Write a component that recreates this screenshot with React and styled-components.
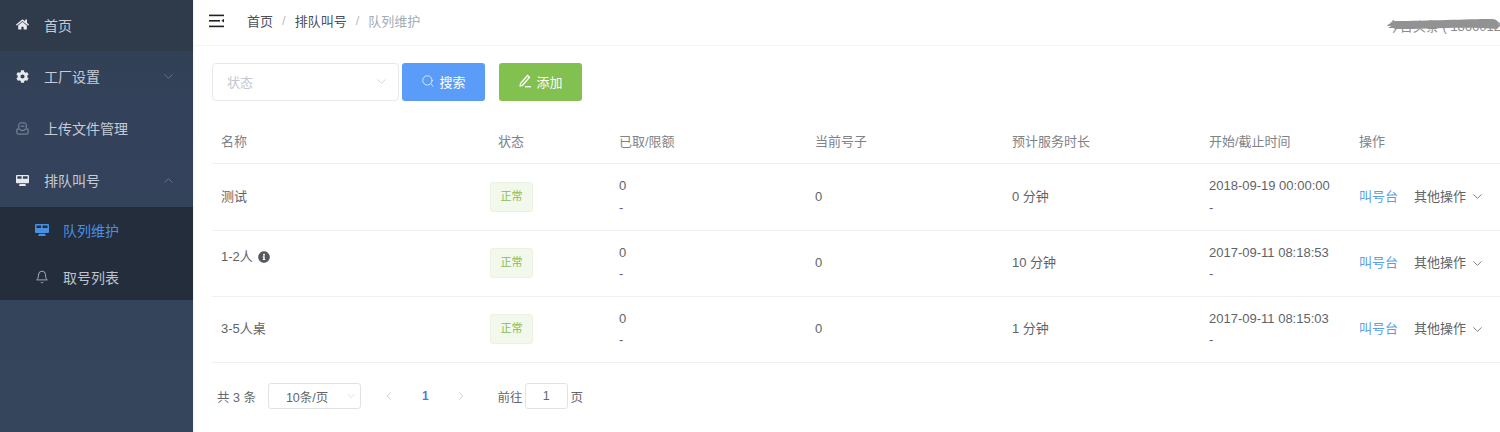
import React from "react";
import styled, { createGlobalStyle } from "styled-components";
import { FaHome, FaCog, FaInfoCircle } from "react-icons/fa";
import { LuChevronDown, LuChevronUp, LuChevronLeft, LuChevronRight, LuBell, LuSearch } from "react-icons/lu";

const font = `"Liberation Sans", "Noto Sans CJK SC", sans-serif`;

const GlobalStyle = createGlobalStyle`
  html, body {
    margin: 0;
    padding: 0;
    height: 432px;
    overflow: hidden;
    background: #fff;
    font-family: ${font};
  }
`;

const Page = styled.div`
  display: flex;
  width: 1500px;
  height: 432px;
  overflow: hidden;
`;

// SIDEBAR
const Sidebar = styled.aside`
  width: 193px;
  flex-shrink: 0;
  background: linear-gradient(180deg, #323e50 0px, #33425a 100px, #35455c 432px);
  display: flex;
  flex-direction: column;
`;

const MenuItem = styled.div`
  height: ${(p) => (p.$short ? 51 : 52)}px;
  box-sizing: border-box;
  padding-bottom: 2px;
  display: flex;
  align-items: center;
  padding-left: 16px;
  font-size: 14px;
  color: #c5ccd6;
  background: ${(p) => (p.$dark ? "#2f3a4a" : "transparent")};
  svg.lead {
    width: 13px;
    height: 13px;
    margin-right: 15px;
    color: ${(p) => p.$iconColor || "#e6e9ee"};
  }
`;

const MenuArrow = styled.span`
  margin-left: auto;
  margin-right: 17px;
  display: flex;
  color: #76839a;
  svg {
    width: 15px;
    height: 15px;
    stroke-width: 1.2;
  }
`;

const SubMenu = styled.div`
  background: #232d3b;
  height: 93px;
  display: flex;
  flex-direction: column;
`;

const SubItem = styled.div`
  height: 46.5px;
  display: flex;
  align-items: center;
  padding-left: 35px;
  font-size: 14px;
  color: ${(p) => (p.$active ? "#4a90e2" : "#bcc4cf")};
  svg {
    width: 14px;
    height: 14px;
    margin-right: 14px;
    stroke-width: 1.4;
  }
`;

// MAIN
const Main = styled.main`
  flex: 1;
  min-width: 0;
  display: flex;
  flex-direction: column;
  box-shadow: inset 1px 0 0 #eef5fb;
`;

const Header = styled.header`
  height: 46px;
  flex-shrink: 0;
  box-sizing: border-box;
  border-bottom: 1px solid #f3f4f5;
  display: flex;
  align-items: center;
  padding-left: 16px;
  padding-bottom: 4px;
  position: relative;
`;

const Crumb = styled.span`
  font-size: 13px;
  color: ${(p) => (p.$last ? "#a3abb5" : "#4a4f57")};
`;

const CrumbSep = styled.span`
  font-size: 13px;
  color: #b8bcc2;
  margin: 0 9px;
`;

const Crumbs = styled.div`
  display: flex;
  align-items: center;
  margin-left: 22px;
`;

const User = styled.div`
  position: absolute;
  right: -1px;
  top: 18px;
  font-size: 13px;
  line-height: 18px;
  color: #8a8a8a;
  white-space: nowrap;
`;

const Smear = styled.svg`
  position: absolute;
  right: 0;
  top: 16px;
  width: 113px;
  height: 18px;
`;

const Toolbar = styled.div`
  display: flex;
  align-items: center;
  padding: 17px 0 0 19px;
`;

const SelectBox = styled.div`
  width: 187px;
  height: 38px;
  box-sizing: border-box;
  border: 1px solid #e6e8eb;
  border-radius: 4px;
  display: flex;
  align-items: center;
  padding: 0 9px 2px 14px;
  font-size: 13px;
  color: #c3c8cf;
  svg {
    margin-left: auto;
    width: 15px;
    height: 15px;
    color: #c0c4cc;
    stroke-width: 1.2;
  }
`;

const Button = styled.div`
  height: 38px;
  box-sizing: border-box;
  padding-bottom: 2px;
  width: ${(p) => p.$width}px;
  margin-left: ${(p) => p.$gap}px;
  border-radius: 3px;
  background: ${(p) => p.$bg};
  color: #fff;
  font-size: 13px;
  display: flex;
  align-items: center;
  justify-content: center;
  gap: 4px;
  svg {
    width: 14px;
    height: 14px;
    stroke-width: 1.3;
  }
`;

// TABLE
const Table = styled.div`
  margin: 19px 0 0 19px;
`;

const Row = styled.div`
  display: grid;
  grid-template-columns: 277px 121px 196px 197px 197px 150px 1fr;
  height: ${(p) => p.$height}px;
  box-sizing: border-box;
  border-bottom: 1px solid #eef0f2;
  align-items: center;
  font-size: 13px;
  color: #5f6368;
`;

const HeadCell = styled.div`
  padding-left: 9px;
  font-size: 13px;
  color: #7e8389;
  padding-bottom: 2px;
`;

const Cell = styled.div`
  padding-left: 9px;
  padding-bottom: 1px;
  line-height: 21.5px;
  white-space: nowrap;
  font-size: 13px;
`;

const NameWithInfo = styled(Cell)`
  display: flex;
  align-items: center;
  gap: 5px;
  align-self: start;
  padding-top: 15px;
  svg {
    width: 12px;
    height: 12px;
    color: #55585d;
  }
`;

const Tag = styled.span`
  display: inline-flex;
  align-items: center;
  justify-content: center;
  width: 43px;
  height: 30px;
  box-sizing: border-box;
  background: #f2f9ec;
  border: 1px solid #e9f3df;
  border-radius: 3px;
  color: #85bd55;
  font-size: 11px;
  margin-left: -8px;
`;

const LinkText = styled.span`
  color: #5a9fe6;
  margin-right: 16px;
`;

const MoreText = styled.span`
  display: inline-flex;
  align-items: center;
  color: #5f6368;
  svg {
    width: 15px;
    height: 15px;
    margin-left: 4px;
    stroke-width: 1.3;
  }
`;

// PAGER
const Pager = styled.div`
  display: flex;
  align-items: center;
  margin: 20px 0 0 24px;
  font-size: 12.5px;
  color: #63676d;
`;

const PageSize = styled.div`
  width: 93px;
  height: 26px;
  margin-left: 12px;
  box-sizing: border-box;
  border: 1px solid #dfe2e6;
  border-radius: 3px;
  display: flex;
  align-items: center;
  padding-left: 17px;
  svg {
    margin-left: auto;
    margin-right: 3px;
    width: 12px;
    height: 12px;
    color: #c5c9cf;
    stroke-width: 1.2;
  }
`;

const PageArrow = styled.span`
  display: flex;
  color: #b4b9bf;
  margin-left: ${(p) => p.$gap}px;
  svg {
    width: 14px;
    height: 14px;
    stroke-width: 1.2;
  }
`;

const PageNumber = styled.span`
  color: #4a7fd0;
  font-weight: 700;
  font-size: 12px;
  margin-left: 26px;
`;

const JumpLabel = styled.span`
  margin-left: 30px;
`;

const JumpInput = styled.div`
  width: 43px;
  height: 26px;
  box-sizing: border-box;
  margin: 0 3px 0 2px;
  border: 1px solid #dfe2e6;
  border-radius: 3px;
  display: flex;
  align-items: center;
  justify-content: center;
`;

const ToggleIcon = () => (
  <svg width="16" height="14" viewBox="0 0 16 14" fill="#222">
    <rect x="0" y="0.6" width="15" height="1.6" />
    <rect x="0" y="6" width="11" height="1.6" />
    <rect x="0" y="11.6" width="15" height="1.6" />
    <path d="M15 4.8v3.8l-2.6-1.9z" />
  </svg>
);

const UploadIcon = () => (
  <svg className="lead" viewBox="0 0 14 14" fill="none" stroke="currentColor" strokeWidth="0.9">
    <path d="M3 6.5V3a2 2 0 0 1 2-2h4a2 2 0 0 1 2 2v3.5" />
    <path d="M1 7.5h3.2l.8 1.5h4l.8-1.5H13v4.5a1 1 0 0 1-1 1H2a1 1 0 0 1-1-1z" />
    <path d="M5 4.5h4" />
  </svg>
);

const ScreenIcon = ({ className }) => (
  <svg className={className} viewBox="0 0 14 14" fill="currentColor">
    <path fillRule="evenodd" d="M1 1h12a1 1 0 0 1 1 1v7a1 1 0 0 1-1 1H1a1 1 0 0 1-1-1V2a1 1 0 0 1 1-1zm.5 1.5v2.6h4.5V2.5zm6 0v2.6h5V2.5z" />
    <path d="M4 10.8h6l.8 2.2H3.2z" />
  </svg>
);

const EditIcon = () => (
  <svg viewBox="0 0 14 14" fill="none" stroke="currentColor" strokeWidth="1">
    <path d="M2.5 9.5 9.5 1.5l2 1.8-7 8-2.3.6z" />
    <path d="M7 12.7h6" />
  </svg>
);

const rows = [
  { name: "测试", height: 67, wait: "0 分钟", time: "2018-09-19 00:00:00" },
  { name: "1-2人", info: true, height: 66, wait: "10 分钟", time: "2017-09-11 08:18:53" },
  { name: "3-5人桌", height: 66, wait: "1 分钟", time: "2017-09-11 08:15:03" },
];

const columns = ["名称", "状态", "已取/限额", "当前号子", "预计服务时长", "开始/截止时间", "操作"];

const App = () => (
  <Page>
    <GlobalStyle />
    <Sidebar>
      <MenuItem $dark $short>
        <FaHome className="lead" />
        首页
      </MenuItem>
      <MenuItem>
        <FaCog className="lead" />
        工厂设置
        <MenuArrow>
          <LuChevronDown />
        </MenuArrow>
      </MenuItem>
      <MenuItem $iconColor="#93a0b2">
        <UploadIcon />
        上传文件管理
      </MenuItem>
      <MenuItem>
        <ScreenIcon className="lead" />
        排队叫号
        <MenuArrow>
          <LuChevronUp />
        </MenuArrow>
      </MenuItem>
      <SubMenu>
        <SubItem $active>
          <ScreenIcon />
          队列维护
        </SubItem>
        <SubItem>
          <LuBell />
          取号列表
        </SubItem>
      </SubMenu>
    </Sidebar>
    <Main>
      <Header>
        <ToggleIcon />
        <Crumbs>
          <Crumb>首页</Crumb>
          <CrumbSep>/</CrumbSep>
          <Crumb>排队叫号</Crumb>
          <CrumbSep>/</CrumbSep>
          <Crumb $last>队列维护</Crumb>
        </Crumbs>
        <User>今日头条 ( 1866012</User>
        <Smear viewBox="0 0 113 18" fill="#929292">
          <path d="M1 9L8 5C40 5 80 3 105 3C110 3 112 6 112 10L110 13C80 10 40 13 8 13Z" />
        </Smear>
      </Header>
      <Toolbar>
        <SelectBox>
          状态
          <LuChevronDown />
        </SelectBox>
        <Button $bg="#5a9cf8" $width={83} $gap={3}>
          <LuSearch />
          搜索
        </Button>
        <Button $bg="#82c04f" $width={83} $gap={14}>
          <EditIcon />
          添加
        </Button>
      </Toolbar>
      <Table>
        <Row $height={44}>
          {columns.map((c) => (
            <HeadCell key={c}>{c}</HeadCell>
          ))}
        </Row>
        {rows.map((r) => (
          <Row key={r.name} $height={r.height}>
            {r.info ? (
              <NameWithInfo>
                {r.name}
                <FaInfoCircle />
              </NameWithInfo>
            ) : (
              <Cell>{r.name}</Cell>
            )}
            <Cell>
              <Tag>正常</Tag>
            </Cell>
            <Cell>
              0
              <br />-
            </Cell>
            <Cell>0</Cell>
            <Cell>{r.wait}</Cell>
            <Cell>
              {r.time}
              <br />-
            </Cell>
            <Cell>
              <LinkText>叫号台</LinkText>
              <MoreText>
                其他操作
                <LuChevronDown />
              </MoreText>
            </Cell>
          </Row>
        ))}
      </Table>
      <Pager>
        共 3 条
        <PageSize>
          10条/页
          <LuChevronDown />
        </PageSize>
        <PageArrow $gap={21}>
          <LuChevronLeft />
        </PageArrow>
        <PageNumber>1</PageNumber>
        <PageArrow $gap={25}>
          <LuChevronRight />
        </PageArrow>
        <JumpLabel>前往</JumpLabel>
        <JumpInput>1</JumpInput>
        页
      </Pager>
    </Main>
  </Page>
);

export default App;
